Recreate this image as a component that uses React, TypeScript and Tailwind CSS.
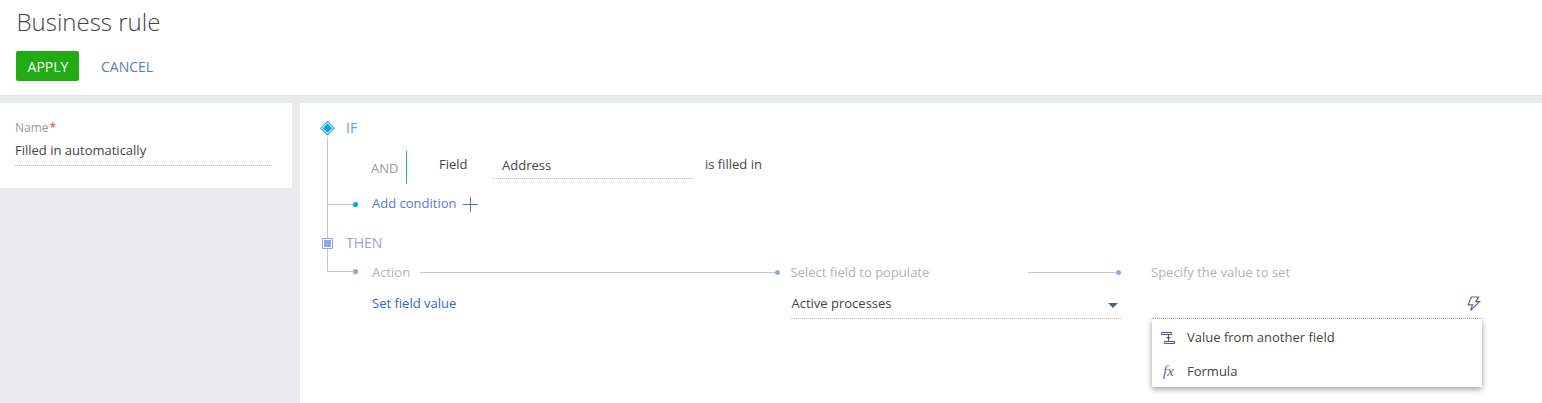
import type { ReactNode } from 'react';
import { clsx } from 'clsx';

const menuItems = [
  { id: 'field', label: 'Value from another field', icon: <FieldIcon /> },
  { id: 'formula', label: 'Formula', icon: <FormulaIcon /> },
];

function FieldIcon() {
  return (
    <svg className="mt-0.5" width="14" height="12" viewBox="0 0 14 12" fill="none" stroke="#4b5a85">
      <path d="M.5.5h10v2H.5zM3.5 9.5h10v2h-10z" />
      <path d="M7.5 3v6" />
      <path d="M5.2 5h4.6L7.5 7.8z" fill="#4b5a85" stroke="none" />
    </svg>
  );
}

function FormulaIcon() {
  return (
    <span className="pl-0.5 font-['Liberation_Serif',serif] text-[15px] leading-none text-[#5a688f] italic">fx</span>
  );
}

function BoltIcon() {
  return (
    <svg width="14" height="16" viewBox="0 0 14 16" fill="none" stroke="#56668f" strokeWidth="1.2">
      <path d="M4.3 1h7.2L8.9 5.6h3.7L3.6 14.4l1.9-5.6H1.2z" />
    </svg>
  );
}

// Connector lines with the IF / THEN nodes and their branch dots
function RuleTree() {
  return (
    <svg className="shrink-0 overflow-visible" width="26" height="164" viewBox="0 0 26 164" fill="none">
      <path d="M7.5 17v134.5H35M7.5 84.5H35" stroke="#c6c8ca" />
      <path d="M7.4 1.5l6.7 6.7-6.7 6.7L.7 8.2z" fill="#d3f1fb" stroke="#3fb0e0" strokeWidth="1.1" />
      <path d="M7.4 3.6L12 8.2l-4.6 4.6L2.8 8.2z" fill="#0da5e0" />
      <circle cx="35.5" cy="84.5" r="2.6" fill="#0fa5dc" />
      <path d="M2.5 118.5h10v10h-10z" fill="#fff" stroke="#8fa6dc" />
      <path d="M4 120h7v7H4z" fill="#8ea7e2" />
      <circle cx="35.5" cy="151.5" r="2.6" fill="#92abd6" />
    </svg>
  );
}

function StepLine({ className }: { className: string }) {
  return (
    <div className={clsx('flex items-center', className)}>
      <div className="h-px flex-1 bg-[#c6c8ca]" />
      <div className="size-[5px] rounded-full bg-[#8fabda]" />
    </div>
  );
}

function DottedField({ className, children }: { className?: string; children?: ReactNode }) {
  return (
    <div className={clsx('flex items-center justify-between border-b border-dotted border-[#b9b9b9]', className)}>
      {children}
    </div>
  );
}

export default function App() {
  return (
    <div className="flex h-[403px] flex-col overflow-hidden bg-[#e8eced] font-['Open_Sans',sans-serif] text-[13px] leading-5 text-[#444]">
      <header className="h-[96px] shrink-0 border-b border-[#e0e4e4] bg-white px-4 pt-1">
        <h1 className="pl-[0.5px] text-2xl leading-[35px] font-light">Business rule</h1>
        <div className="mt-3 flex items-center">
          <button className="h-[30px] w-[63px] rounded-[2px] bg-[#22ac14] pt-0.5 pl-px text-sm text-white">APPLY</button>
          <button className="ml-[22px] pt-0.5 text-sm text-[#5b7bc9]">CANCEL</button>
        </div>
      </header>

      <div className="flex flex-1 gap-2 pt-[7px]">
        <aside className="h-[85px] w-[292px] rounded-r-[2px] bg-white pt-[15px] pl-[15px]">
          <label className="block text-xs leading-5 text-[#999]">
            Name<span className="ml-px text-[#d64a3c]">*</span>
          </label>
          <DottedField className="h-7 w-[257px] pb-1">Filled in automatically</DottedField>
        </aside>

        <main className="flex flex-1 items-start rounded-tl-[2px] bg-white pt-[17px] pl-5">
          <RuleTree />
          <div className="-mt-0.5">
            <h2 className="text-sm leading-5 text-[#45aad6]">IF</h2>

            <div className="mt-[13px] flex h-[33px] items-start pl-[25px]">
              <span className="w-[35px] pt-[7px] text-[#999]">AND</span>
              <span className="h-full w-px bg-[#25a4bd]" />
              <span className="ml-8 w-[53px] pt-[3px]">Field</span>
              <DottedField className="h-7 w-[201px] pl-2.5">Address</DottedField>
              <span className="ml-3 pt-[3px]">is filled in</span>
            </div>

            <button className="mt-[9px] flex h-5 items-center gap-[7px] pl-[26px] text-[#5b78c4]">
              Add condition
              <svg className="mt-1" width="15" height="16" viewBox="0 0 15 16" stroke="#5573b8">
                <path d="M7.5 0v15M0 7.5h15" />
              </svg>
            </button>

            <h2 className="mt-5 text-sm leading-5 text-[#8ea4d6]">THEN</h2>

            <div className="mt-[9px] flex h-5 items-center pl-[26px] text-[#b3b3b3]">
              <span className="w-12">Action</span>
              <StepLine className="w-[360px]" />
              <span className="ml-2.5 w-[238px] pl-[0.5px]">Select field to populate</span>
              <StepLine className="w-[93px]" />
              <span className="ml-[30px]">Specify the value to set</span>
            </div>

            <div className="mt-[9px] flex pl-[26px]">
              <button className="h-6 w-[419px] text-left text-[#3068cd]">Set field value</button>
              <DottedField className="h-7 w-[330px] pb-1 pl-[0.5px]">
                Active processes
                <svg className="mt-1.5 mr-[3px]" width="10" height="5" viewBox="0 0 10 5" fill="#4a6298">
                  <path d="M0 0h10L5 5z" />
                </svg>
              </DottedField>
              <div className="relative ml-[31px] w-[330px]">
                <DottedField className="h-7 pr-px pb-px">
                  <span />
                  <BoltIcon />
                </DottedField>
                <ul className="absolute top-7 left-0 h-[68px] w-full bg-white pt-px shadow-[0_2px_6px_rgba(0,0,0,0.4)]">
                  {menuItems.map((item) => (
                    <li key={item.id} className="flex h-[34px] items-center">
                      <span className="flex w-[35px] items-center pl-[9px]">{item.icon}</span>
                      {item.label}
                    </li>
                  ))}
                </ul>
              </div>
            </div>
          </div>
        </main>
      </div>
    </div>
  );
}
